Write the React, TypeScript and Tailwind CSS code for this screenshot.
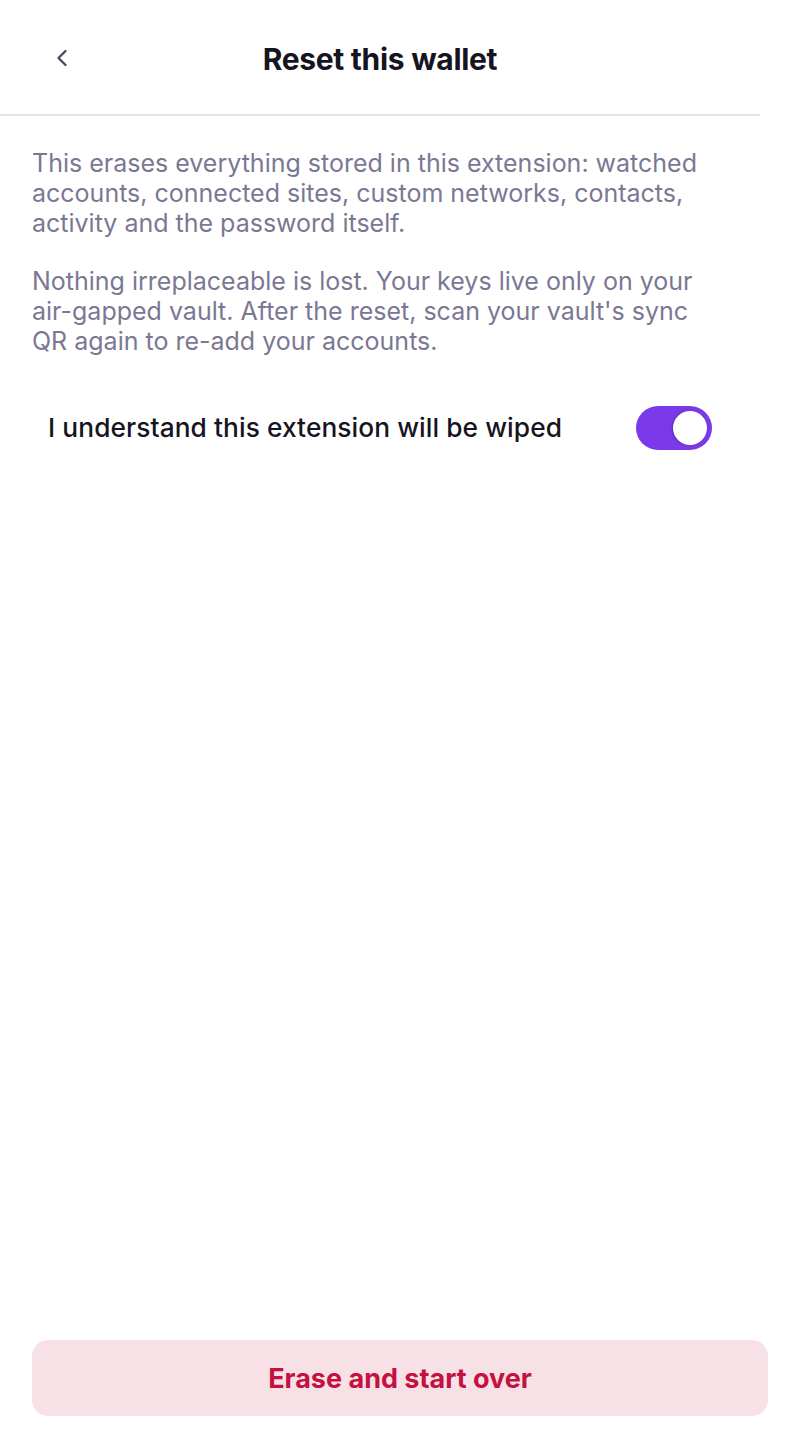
import React, { useState } from "react";
import { ChevronLeft } from "lucide-react";

const App = () => {
  const [agreed, setAgreed] = useState(true);

  return (
    <div
      className="flex min-h-[1440px] w-[800px] flex-col bg-white"
      style={{ fontFamily: "Inter, 'Noto Sans', sans-serif" }}
    >
      {/* HEADER */}
      <div className="w-[760px] border-b-2 border-[#e4e2ef]">
        <div className="relative flex h-[114px] items-center justify-center pt-1">
          <button className="absolute left-[48px] top-[44px] text-[#4a4860]">
            <ChevronLeft className="h-7 w-7" strokeWidth={2} />
          </button>
          <h1 className="text-[30px] font-bold tracking-[-0.01em] text-[#16151f]">
            Reset this wallet
          </h1>
        </div>
      </div>

      {/* BODY */}
      <div className="flex flex-1 flex-col px-8 pt-[32px]">
        <p className="w-[680px] text-[25px] leading-[30px] text-[#7a7893]">
          This erases everything stored in this extension: watched accounts,
          connected sites, custom networks, contacts, activity and the password
          itself.
        </p>
        <p className="mt-7 w-[680px] text-[25px] leading-[30px] text-[#7a7893]">
          Nothing irreplaceable is lost. Your keys live only on your air-gapped
          vault. After the reset, scan your vault's sync QR again to re-add your
          accounts.
        </p>

        <div className="mt-[50px] flex w-[680px] items-center justify-between pl-4">
          <span className="text-[26.3px] font-medium tracking-[0.003em] text-[#16151f]">
            I understand this extension will be wiped
          </span>
          <button
            onClick={() => setAgreed(!agreed)}
            className={`flex h-[44px] w-[76px] items-center rounded-full p-[5px] ${
              agreed ? "justify-end bg-[#7b3aea]" : "justify-start bg-[#d9d7e3]"
            }`}
          >
            <span className="h-[34px] w-[34px] rounded-full bg-white shadow-[-1px_0_3px_rgba(0,0,0,0.25)]"></span>
          </button>
        </div>

        <div className="flex-1"></div>

        {/* ACTION */}
        <button className="mb-[24px] h-[76px] w-full rounded-2xl bg-[#f7e1e7] pt-[2px] text-[27px] font-bold text-[#c4113f]">
          Erase and start over
        </button>
      </div>
    </div>
  );
};

export default App;
